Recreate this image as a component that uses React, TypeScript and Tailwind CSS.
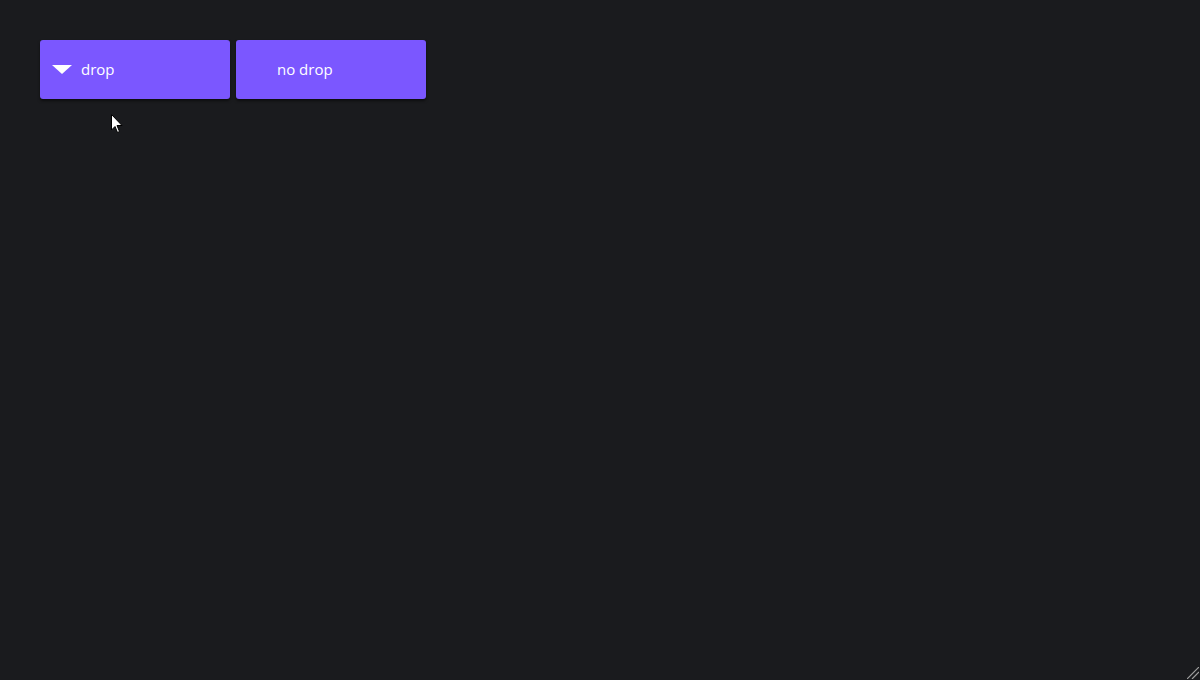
import React from "react";

function Btn({ label, icon }: { label: string; icon?: boolean }) {
  return (
    <div className="flex h-[59px] w-[190px] items-center rounded-[3px] bg-[#7b57ff] pl-[12px] text-[15px] text-white shadow-[0_2px_3px_rgba(0,0,0,0.5)]">
      <span className="flex w-[29px] items-center">
        {icon && (
          <svg width="20" height="9" viewBox="0 0 20 9">
            <polygon points="0,0 20,0 10,9" fill="#ffffff" />
          </svg>
        )}
      </span>
      <span className="pb-[1px]">{label}</span>
    </div>
  );
}

export default function App() {
  return (
    <div
      className="relative h-[680px] w-[1200px] overflow-hidden bg-[#1a1b1e]"
      style={{ fontFamily: '"Open Sans", "Noto Sans", sans-serif' }}
    >
      <div className="flex gap-[6px] pl-[40px] pt-[40px]">
        <Btn label="drop" icon />
        <Btn label="no drop" />
      </div>
      <svg className="absolute left-[111px] top-[114px]" width="12" height="21" viewBox="0 0 12 21">
        <path d="M0.5 0.5 L0.5 16 L4 12.5 L6.5 18.5 L8.5 17.5 L6 11.5 L11 11.5 Z" fill="#ffffff" stroke="#000000" strokeWidth="1" />
      </svg>
      <svg className="absolute bottom-[1px] right-[1px]" width="12" height="12" viewBox="0 0 12 12">
        <line x1="0" y1="12" x2="12" y2="0" stroke="#a0a0a0" strokeWidth="1.2" />
        <line x1="5" y1="12" x2="12" y2="5" stroke="#a0a0a0" strokeWidth="1.2" />
      </svg>
    </div>
  );
}
